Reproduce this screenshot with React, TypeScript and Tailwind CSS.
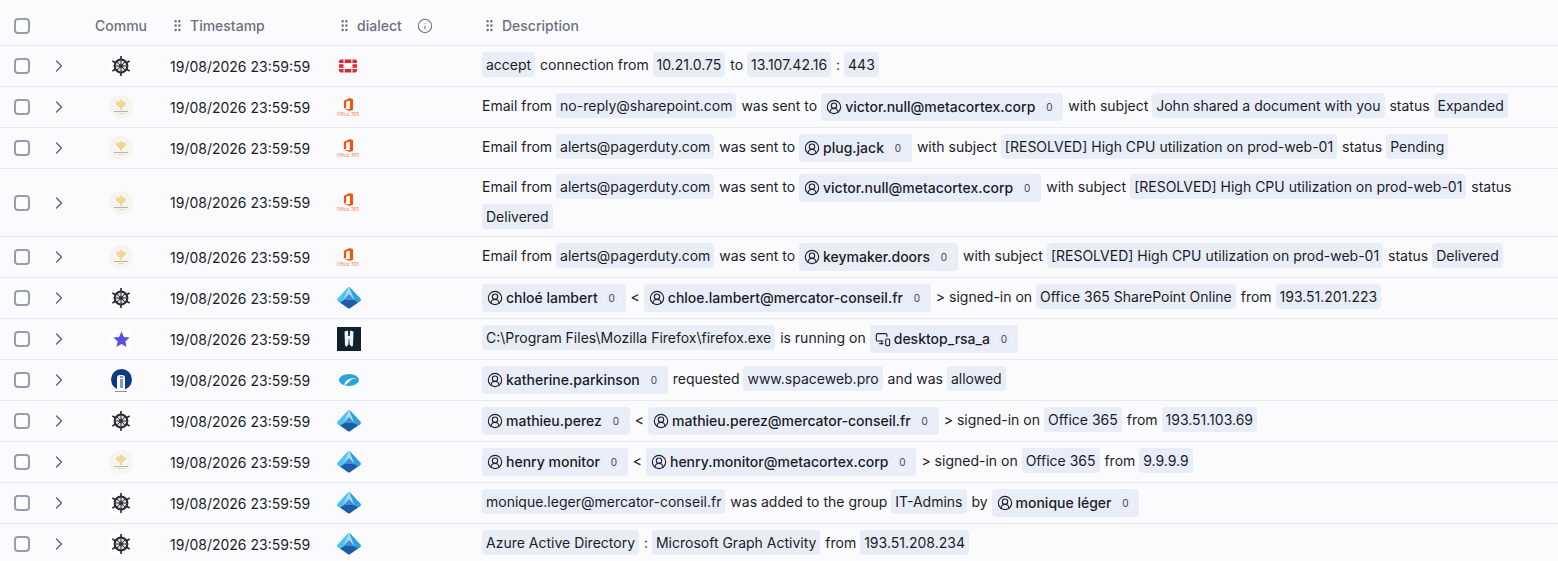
import { ChevronRight, CircleUserRound, Info, GripVertical, MonitorSmartphone } from "lucide-react";
import type { ReactNode } from "react";

function Tag({ children }: { children: ReactNode }) {
  return <span className="mr-[1px] inline-block rounded-[4px] bg-[#e9edf8] px-[4px] py-[3px] leading-[19px]">{children}</span>;
}

function Entity({ name, icon = "user" }: { name: string; icon?: "user" | "host" }) {
  return (
    <span className="mr-[1px] inline-flex h-[28px] items-center gap-[3px] rounded-[4px] bg-[#e9edf8] pl-[5px] pr-[5px] align-middle">
      {icon === "user" ? (
        <CircleUserRound className="h-[16px] w-[16px] text-[#1f2330]" strokeWidth={1.7} />
      ) : (
        <MonitorSmartphone className="h-[16px] w-[16px] text-[#1f2330]" strokeWidth={1.7} />
      )}
      <span className="-translate-y-[1px] font-medium text-[#1a1d29]">{name}</span>
      <span className="ml-[2px] flex h-[18px] w-[18px] items-center justify-center rounded-full border border-[#f2f4fb] text-[10px] text-[#3f4454]">0</span>
    </span>
  );
}

function Wheel() {
  return (
    <span className="flex h-[24px] w-[24px] items-center justify-center rounded-full bg-white">
      <svg viewBox="0 0 24 24" className="h-[22px] w-[22px]" fill="none" stroke="#2a2c33">
        <circle cx="12" cy="12" r="7" strokeWidth="2.200" fill="#d8d8dc" />
        <circle cx="12" cy="12" r="2" strokeWidth="1" fill="#ffffff" />
        <path d="M12 5v14M5 12h14M7 7l10 10M17 7L7 17" strokeWidth="1" />
        <path d="M12 1v4M12 19v4M2.500 6.500l3.500 2M18 15.500l3.500 2M2.500 17.500l3.500-2M18 8.500l3.500-2" strokeWidth="1.800" />
      </svg>
    </span>
  );
}

function Metacortex() {
  return (
    <span className="flex h-[24px] w-[24px] flex-col items-center justify-center rounded-full bg-[#f6f4ec]">
      <svg viewBox="0 0 12 12" className="h-[10px] w-[10px]" fill="#eccb7c">
        <path d="M5.100 0h1.800v12H5.100zM2.200 1.500h1.800l.6 7H3zM8 1.500h1.800L9 8.500H7.400zM0 3l1.600-.5.800 4H1.300zM12 3l-1.600-.5-.8 4h1.100z" />
      </svg>
      <span className="mt-[1px] h-[1px] w-[14px] bg-[#b4b4b2]" />
      <span className="mt-[1px] h-[1px] w-[6px] bg-[#dcdad0]" />
    </span>
  );
}

function Star() {
  return (
    <span className="flex h-[24px] w-[24px] items-center justify-center rounded-full bg-white">
      <svg viewBox="0 0 24 24" className="h-[19px] w-[19px]" fill="#5b4fe0">
        <path d="M12 2l3 6.800 7.300.7-5.500 4.900 1.600 7.200L12 17.800l-6.400 3.800 1.600-7.200L1.700 9.500 9 8.800z" />
      </svg>
    </span>
  );
}

function InfoBadge() {
  return (
    <span className="flex flex-col items-center">
      <span className="flex h-[21px] w-[21px] items-end justify-center rounded-full bg-[#0d3b80]">
        <span className="flex h-[15px] w-[8px] flex-col items-center justify-center gap-[1px] rounded-t-[3px] bg-white">
          <span className="h-[2px] w-[3px] bg-[#7d9cc8]" />
          <span className="h-[9px] w-[3px] bg-[#7d9cc8]" />
        </span>
      </span>
      <span className="mt-[1px] h-[1px] w-[12px] bg-[#8b93a5]" />
    </span>
  );
}

function Fortinet() {
  return (
    <svg viewBox="0 0 18 14" className="ml-[2px] h-[14px] w-[18px]" fill="#e0282e">
      <path d="M0 5.200h4.500v3.600H0zM13.500 5.200H18v3.600h-4.500zM0 3.900V2.500A2 2 0 0 1 2 .5h2.500v3.400zM5.700.5h6.600v3.400H5.700zM13.500.5H16a2 2 0 0 1 2 2v1.400h-4.500zM0 10.100h4.500v3.400H2a2 2 0 0 1-2-2zM5.700 10.100h6.600v3.400H5.700zM13.500 10.100H18v1.400a2 2 0 0 1-2 2h-2.500z" />
    </svg>
  );
}

function Office() {
  return (
    <span className="flex w-[22px] flex-col items-center">
      <svg viewBox="0 0 12 14" className="h-[13px] w-[11px]" fill="#e8590c">
        <path d="M1 3l6.500-3L11 1.200v11.600L7.500 14 1 11.500l6.500.8V2.800L3.500 3.800v6.500L1 11.500z" />
      </svg>
      <span className="mt-[1px] text-[4.500px] leading-[5px] whitespace-nowrap text-[#ea7a45]">Office 365</span>
    </span>
  );
}

function Azure() {
  return (
    <svg viewBox="0 0 24 22" className="h-[22px] w-[24px]">
      <path d="M12 0c-.6 0-1 .3-1.400.7L.6 11.500c-.8.9-.7 2 .3 2.700L7 18z" fill="#4fc3f0" />
      <path d="M12 0c.6 0 1 .3 1.400.7l10 10.800c.8.9.7 2-.3 2.700L17 18z" fill="#2f9fe0" />
      <path d="M12 0L6.500 13h11z" fill="#a9dcf3" />
      <path d="M6.500 13h11L12 7z" fill="#3f8fd2" />
      <path d="M3 15.500l8 5.800c.6.400 1.400.4 2 0l8-5.800-4.500-2.500h-9z" fill="#1d5ca6" />
    </svg>
  );
}

function Wiz() {
  return (
    <span className="flex h-[24px] w-[24px] items-center justify-center bg-[#10202f]">
      <svg viewBox="0 0 12 18" className="h-[18px] w-[12px]" fill="#eef1f4">
        <path d="M1.500 1.500L5 .5l.2 5.500h1.600L7 .5l3.500 1L10 15l-1 2-2.400-2.500L6.300 9h-.6l-.3 5.500L3 17l-1-2z" />
      </svg>
    </span>
  );
}

function Zscaler() {
  return (
    <svg viewBox="0 0 20 12" className="ml-[2px] h-[12px] w-[20px]">
      <ellipse cx="10" cy="6" rx="10" ry="6" fill="#2aa3df" />
      <path d="M7 7c2-2.500 7-3.500 11-3-3.500.4-6 1.500-7 3C10 8.500 7 9.500 6 12 5 10.500 5.800 8.500 7 7z" fill="#fbfbfe" />
    </svg>
  );
}

function Check() {
  return <span className="block h-[16px] w-[16px] rounded-[4px] border-2 border-[#979db1] bg-[#fdfdff]" />;
}

const rows: { community: ReactNode; dialect: ReactNode; tall?: boolean; tagsOnly?: boolean; desc: ReactNode }[] = [
  {
    community: <Wheel />,
    dialect: <Fortinet />,
    tagsOnly: true,
    desc: <><Tag>accept</Tag> connection from <Tag>10.21.0.75</Tag> to <Tag>13.107.42.16</Tag> : <Tag>443</Tag></>,
  },
  {
    community: <Metacortex />,
    dialect: <Office />,
    desc: <>Email from <Tag>no-reply@sharepoint.com</Tag> was sent to <Entity name="victor.null@metacortex.corp" /> with subject <Tag>John shared a document with you</Tag> status <Tag>Expanded</Tag></>,
  },
  {
    community: <Metacortex />,
    dialect: <Office />,
    desc: <>Email from <Tag>alerts@pagerduty.com</Tag> was sent to <Entity name="plug.jack" /> with subject <Tag>[RESOLVED] High CPU utilization on prod-web-01</Tag> status <Tag>Pending</Tag></>,
  },
  {
    community: <Metacortex />,
    dialect: <Office />,
    tall: true,
    desc: <>Email from <Tag>alerts@pagerduty.com</Tag> was sent to <Entity name="victor.null@metacortex.corp" /> with subject <Tag>[RESOLVED] High CPU utilization on prod-web-01</Tag> status <Tag>Delivered</Tag></>,
  },
  {
    community: <Metacortex />,
    dialect: <Office />,
    desc: <>Email from <Tag>alerts@pagerduty.com</Tag> was sent to <Entity name="keymaker.doors" /> with subject <Tag>[RESOLVED] High CPU utilization on prod-web-01</Tag> status <Tag>Delivered</Tag></>,
  },
  {
    community: <Wheel />,
    dialect: <Azure />,
    desc: <><Entity name="chloé lambert" /> &lt; <Entity name="chloe.lambert@mercator-conseil.fr" /> &gt; signed-in on <Tag>Office 365 SharePoint Online</Tag> from <Tag>193.51.201.223</Tag></>,
  },
  {
    community: <Star />,
    dialect: <Wiz />,
    desc: <><Tag>C:\Program Files\Mozilla Firefox\firefox.exe</Tag> is running on <Entity name="desktop_rsa_a" icon="host" /></>,
  },
  {
    community: <InfoBadge />,
    dialect: <Zscaler />,
    desc: <><Entity name="katherine.parkinson" /> requested <Tag>www.spaceweb.pro</Tag> and was <Tag>allowed</Tag></>,
  },
  {
    community: <Wheel />,
    dialect: <Azure />,
    desc: <><Entity name="mathieu.perez" /> &lt; <Entity name="mathieu.perez@mercator-conseil.fr" /> &gt; signed-in on <Tag>Office 365</Tag> from <Tag>193.51.103.69</Tag></>,
  },
  {
    community: <Metacortex />,
    dialect: <Azure />,
    desc: <><Entity name="henry monitor" /> &lt; <Entity name="henry.monitor@metacortex.corp" /> &gt; signed-in on <Tag>Office 365</Tag> from <Tag>9.9.9.9</Tag></>,
  },
  {
    community: <Wheel />,
    dialect: <Azure />,
    desc: <><Tag>monique.leger@mercator-conseil.fr</Tag> was added to the group <Tag>IT-Admins</Tag> by <Entity name="monique léger" /></>,
  },
  {
    community: <Wheel />,
    dialect: <Azure />,
    tagsOnly: true,
    desc: <><Tag>Azure Active Directory</Tag> : <Tag>Microsoft Graph Activity</Tag> from <Tag>193.51.208.234</Tag></>,
  },
];

export default function App() {
  return (
    <div className="h-[561px] w-[1558px] overflow-hidden bg-[#fbfbfe] font-['Inter',sans-serif] text-[14px] text-[#1a1d29]">
      <div className="flex h-[46px] items-center border-b border-[#e6e8f2] pt-[6px] font-medium text-[#6b7080]">
        <div className="flex w-[44px] justify-center"><Check /></div>
        <div className="w-[51px]" />
        <div className="w-[75px]">Commu</div>
        <div className="flex w-[167px] items-center gap-[5px]"><GripVertical className="h-[15px] w-[15px]" strokeWidth={2} />Timestamp</div>
        <div className="flex w-[145px] items-center gap-[5px]">
          <GripVertical className="h-[15px] w-[15px]" strokeWidth={2} />dialect
          <Info className="ml-[10px] h-[16px] w-[16px]" strokeWidth={1.6} />
        </div>
        <div className="flex items-center gap-[5px]"><GripVertical className="h-[15px] w-[15px]" strokeWidth={2} />Description</div>
      </div>
      {rows.map((row, i) => (
        <div key={i} className={`flex items-center border-b border-[#e6e8f2] ${row.tall ? "h-[68px]" : "h-[41px]"}`}>
          <div className="flex w-[44px] justify-center"><Check /></div>
          <div className="w-[30px]"><ChevronRight className="ml-[5px] h-[20px] w-[20px] text-[#5b6070]" strokeWidth={1.5} /></div>
          <div className="flex w-[94px] justify-center">{row.community}</div>
          <div className="w-[169px] pl-[2px] whitespace-nowrap">19/08/2026 23:59:59</div>
          <div className="w-[145px]">{row.dialect}</div>
          <div className={`w-[1076px] leading-[29px] ${row.tagsOnly ? "pb-[4px]" : "pb-[2px]"}`}>{row.desc}</div>
        </div>
      ))}
    </div>
  );
}
